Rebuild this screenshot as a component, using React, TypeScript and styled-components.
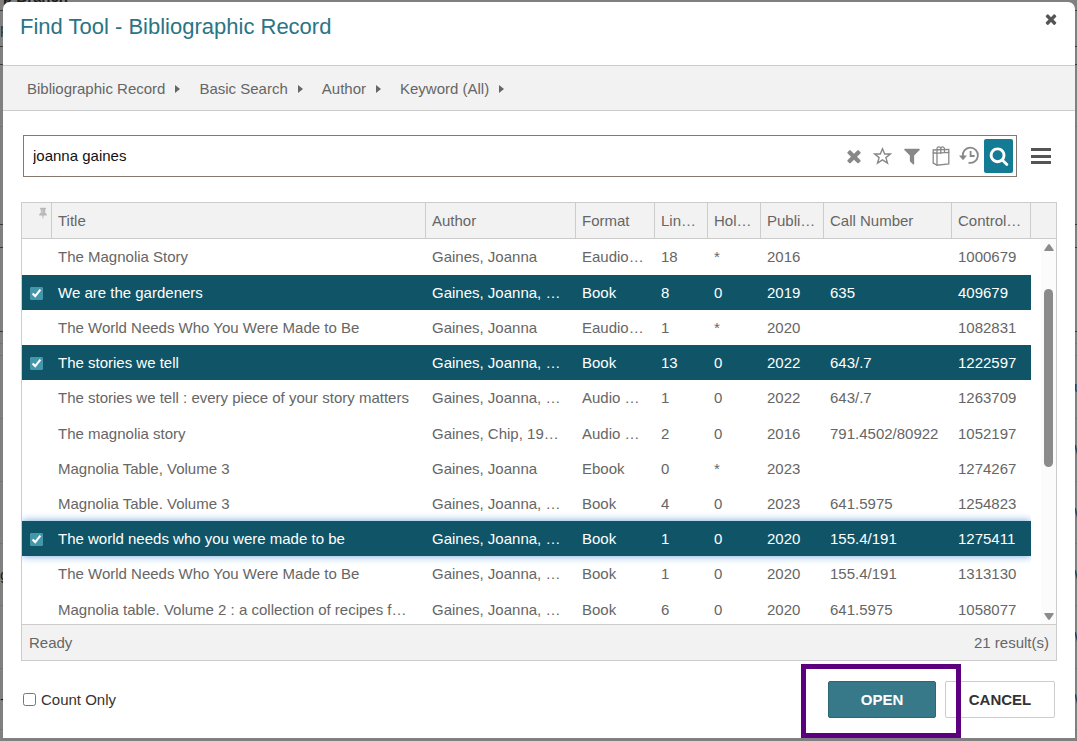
import React from "react";
import styled, { createGlobalStyle } from "styled-components";

const GlobalStyle = createGlobalStyle`
  *, *::before, *::after { box-sizing: border-box; }
  html, body { margin: 0; background: #808080; }
  body {
    font-family: "Liberation Sans", Arial, Helvetica, sans-serif;
    font-size: 15px;
    line-height: 18px;
    color: #666;
  }
  button, input { font: inherit; color: inherit; }
`;

const Stage = styled.div`
  position: relative;
  min-height: 100vh;
  padding: 2px 2px 3px 3px;
  overflow: hidden;
`;

/* dimmed page behind the dialog */
const Behind = styled.div`
  position: absolute;
  inset: 0;
  overflow: hidden;
  color: #1c1c1c;
`;

const BehindRow = styled.div<{ $height: number; $strong?: boolean }>`
  display: flex;
  justify-content: space-between;
  height: ${(p) => p.$height}px;
  border-bottom: 1px solid ${(p) => (p.$strong ? "#3a3a3a" : "#747474")};
`;

const BehindText = styled.span<{ $link?: boolean }>`
  align-self: center;
  color: ${(p) => (p.$link ? "#1d3a57" : "inherit")};
  width: 3px;
  overflow: hidden;
  white-space: nowrap;
`;

const BehindHeading = styled.span`
  margin-top: -12px;
  padding-left: 3px;
  font-weight: bold;
  white-space: nowrap;
`;

const Dialog = styled.section`
  position: relative;
  background: #fff;
  border-radius: 7px 7px 0 0;
`;

const DialogHeader = styled.header`
  display: flex;
  justify-content: space-between;
  align-items: flex-start;
  height: 64px;
  padding: 11px 17px 0;
  border-bottom: 1px solid #ccc;
`;

const DialogTitle = styled.h1`
  margin: 0;
  font-size: 22px;
  line-height: 28px;
  font-weight: normal;
  color: #2a7485;
`;

const IconButton = styled.button`
  display: flex;
  align-items: center;
  justify-content: center;
  padding: 0;
  border: 0;
  background: none;
  color: #888;
  cursor: pointer;
`;

const CloseButton = styled(IconButton)`
  width: 14px;
  height: 12px;
  color: #555;
`;

const Crumbs = styled.nav`
  display: flex;
  align-items: center;
  gap: 19px;
  height: 45px;
  padding: 2px 24px 0;
  background: #f2f2f2;
  border-bottom: 1px solid #ccc;
`;

const Crumb = styled.button`
  display: flex;
  align-items: center;
  gap: 10px;
  padding: 0;
  border: 0;
  background: none;
  white-space: nowrap;
  cursor: pointer;
`;

const SearchRow = styled.form`
  display: flex;
  align-items: center;
  gap: 14px;
  margin: 24px 24px 25px 20px;
`;

const SearchBox = styled.div`
  flex: 1;
  display: flex;
  align-items: center;
  height: 42px;
  padding: 0 3px 0 9px;
  border: 1px solid #857a72;
`;

const SearchInput = styled.input`
  flex: 1;
  min-width: 0;
  padding: 0;
  border: 0;
  outline: 0;
  background: none;
  color: #111;
`;

const SearchTools = styled.div`
  display: flex;
  gap: 8px;
  margin-right: 4px;
`;

const ToolButton = styled(IconButton)`
  width: 21px;
  height: 20px;
`;

const SubmitButton = styled(IconButton)`
  width: 29px;
  height: 34px;
  border-radius: 2px;
  background: #147b95;
  color: #fff;
`;

const Grid = styled.div`
  margin: 0 18px;
  border: 1px solid #ccc;
`;

const GridMain = styled.div`
  display: flex;
  height: 421px;
  overflow: hidden;
`;

const TableArea = styled.div`
  flex: 1;
  min-width: 0;
  overflow: hidden;
`;

const Table = styled.table`
  width: 100%;
  table-layout: fixed;
  border-collapse: separate;
  border-spacing: 0;
`;

const HeadCell = styled.th<{ $width?: number }>`
  width: ${(p) => (p.$width ? `${p.$width}px` : "auto")};
  height: 36px;
  padding: 0 5px 0 6px;
  border-right: 1px solid #ccc;
  border-bottom: 1px solid #ccc;
  background: #f2f2f2;
  font-weight: normal;
  text-align: left;
  white-space: nowrap;
  overflow: hidden;
  text-overflow: ellipsis;
`;

const PinMark = styled.span`
  display: flex;
  justify-content: flex-end;
  height: 28px;
  margin-right: -3px;
  color: #b8b8b8;
`;

const Row = styled.tr<{ $selected?: boolean; $focused?: boolean }>`
  height: 35px;
  position: relative;
  background: ${(p) => (p.$selected ? "#0f5567" : "transparent")};
  color: ${(p) => (p.$selected ? "#fff" : "#666")};
  box-shadow: ${(p) => (p.$focused ? "0 0 8px #6ea3dc" : "none")};

  &:first-child,
  &:nth-child(5n) {
    height: 36px;
  }
`;

const Cell = styled.td<{ $wide?: boolean }>`
  padding: 0 ${(p) => (p.$wide ? 14 : 7)}px 0 6px;
  white-space: nowrap;
  overflow: hidden;
  text-overflow: ellipsis;
`;

const RowCheck = styled.input`
  display: block;
  width: 13px;
  height: 13px;
  margin: 2px 0 0 2px;
  accent-color: #4397ac;
`;

const ScrollColumn = styled.div`
  width: 25px;
  display: flex;
  flex-direction: column;
  align-items: flex-end;
`;

const ScrollHead = styled.div`
  align-self: stretch;
  height: 36px;
  background: #f2f2f2;
  border-bottom: 1px solid #ccc;
`;

const ScrollTrack = styled.div`
  flex: 1;
  width: 15px;
  display: flex;
  flex-direction: column;
  align-items: center;
  padding: 5px 0 4px;
  background: #fbfbfb;
`;

const ScrollThumb = styled.div`
  width: 9px;
  height: 178px;
  margin: 38px 0 auto;
  border-radius: 5px;
  background: #8b8b8b;
`;

const StatusBar = styled.div`
  display: flex;
  justify-content: space-between;
  align-items: center;
  height: 36px;
  padding: 0 7px;
  background: #f2f2f2;
  border-top: 1px solid #ccc;
`;

const DialogFooter = styled.footer`
  display: flex;
  justify-content: space-between;
  align-items: center;
  padding: 20px 20px;
`;

const CountOnly = styled.label`
  display: flex;
  align-items: center;
  gap: 5px;
  color: #333;

  input {
    width: 13px;
    height: 13px;
    margin: 0;
  }
`;

const Actions = styled.div`
  display: flex;
  gap: 9px;
`;

const Highlighted = styled.div`
  position: relative;

  &::after {
    content: "";
    position: absolute;
    inset: -17px -25px -20px -27px;
    border: 5px solid #5d0080;
    pointer-events: none;
    z-index: 1;
  }
`;

const ActionButton = styled.button<{ $primary?: boolean }>`
  width: ${(p) => (p.$primary ? 108 : 110)}px;
  height: 37px;
  padding: 0;
  border: 1px solid ${(p) => (p.$primary ? "#2d6775" : "#ccc")};
  border-radius: 2px;
  background: ${(p) => (p.$primary ? "#377988" : "#fff")};
  color: ${(p) => (p.$primary ? "#fff" : "#333")};
  font-weight: bold;
  cursor: pointer;
`;

const TIMES =
  "M1490 1322q0 40-28 68l-136 136q-28 28-68 28t-68-28l-294-294-294 294q-28 28-68 28t-68-28l-136-136q-28-28-28-68t28-68l294-294-294-294q-28-28-28-68t28-68l136-136q28-28 68-28t68 28l294 294 294-294q28-28 68-28t68 28l136 136q28 28 28 68t-28 68l-294 294 294 294q28 28 28 68z";
const FILTER =
  "M1595 295q17 41-14 70l-493 493v742q0 42-39 59-13 5-25 5-27 0-45-19l-256-256q-19-19-19-45v-486l-493-493q-31-29-14-70 17-39 59-39h1280q42 0 59 39z";
const SEARCH =
  "M1216 832q0-185-131.5-316.5t-316.5-131.5-316.5 131.5-131.5 316.5 131.5 316.5 316.5 131.5 316.5-131.5 131.5-316.5zm512 832q0 52-38 90t-90 38q-54 0-90-38l-343-342q-179 124-399 124-143 0-273.5-55.5t-225-150-150-225-55.5-273.5 55.5-273.5 150-225 225-150 273.5-55.5 273.5 55.5 225 150 150 225 55.5 273.5q0 220-124 399l343 343q37 37 37 90z";
const PIN =
  "M800 864v-448q0-14-9-23t-23-9-23 9-9 23v448q0 14 9 23t23 9 23-9 9-23zm672 352q0 26-19 45t-45 19h-429l-51 483q-2 12-10.5 20.5t-20.5 8.5h-1q-27 0-32-27l-76-485h-404q-26 0-45-19t-19-45q0-123 78.5-221.5t177.5-98.5v-512q-52 0-90-38t-38-90 38-90 90-38h640q52 0 90 38t38 90-38 90-90 38v512q99 0 177.5 98.5t78.5 221.5z";

const GlyphSvg = styled.svg`
  flex: none;
`;

function Glyph({ d, size }: { d: string; size: number }) {
  return (
    <GlyphSvg width={size} height={size} viewBox="0 0 1792 1792" fill="currentColor" aria-hidden="true">
      <path d={d} />
    </GlyphSvg>
  );
}

const StarIcon = () => (
  <svg width="19" height="19" viewBox="0 0 19 19" fill="none" stroke="currentColor" strokeWidth="1.4" aria-hidden="true">
    <path d="M9.500 1.800 11.700 7H17.300L12.900 10.600 14.500 16.200 9.500 12.900 4.500 16.200 6.100 10.600 1.700 7H7.300z" />
  </svg>
);

const BagIcon = () => (
  <svg width="18" height="20" viewBox="0 0 18 20" fill="none" stroke="currentColor" strokeWidth="1.300" aria-hidden="true">
    <path d="M5 7.200 16.800 6.400V17.900L5 19.200z" />
    <path d="M5 7.200 1.200 6.800V17.200L5 19.200" />
    <path d="M1.200 6.800V4L16.800 3.400V6.400" />
    <path d="M5 8V2.600Q5.200.8 6.800.8T8.800 2.600V8M8.800 2.600Q9.200.8 10.600.8T12.500 2.600V7" />
  </svg>
);

const HistoryIcon = () => (
  <svg width="21" height="20" viewBox="0 0 21 20" fill="none" stroke="currentColor" strokeWidth="1.800" aria-hidden="true">
    <path d="M3.800 10.400A7.600 7.600 0 1 1 9.500 16.600" />
    <path d="M0 9.400h8l-4 4.800z" fill="currentColor" stroke="none" />
    <path d="M11.600 5v5h4" />
  </svg>
);

const MenuIcon = () => (
  <svg width="20" height="17" viewBox="0 0 20 17" fill="#555" aria-hidden="true">
    <path d="M0 0h20v3H0zM0 7h20v3H0zM0 13h20v3H0z" />
  </svg>
);

const Caret = () => (
  <svg width="5" height="8" viewBox="0 0 5 8" fill="#666" aria-hidden="true">
    <path d="M0 0l5 4-5 4z" />
  </svg>
);

const Arrow = ({ down }: { down?: boolean }) => (
  <GlyphSvg width="10" height="7" viewBox="0 0 10 7" fill="#8b8b8b" aria-hidden="true">
    <path d={down ? "M1 0h8q1 0 .6 1L6 6.300Q5 7.500 4 6.300L.4 1Q0 0 1 0z" : "M1 7h8q1 0 .6-1L6 .7Q5-.5 4 .7L.4 6Q0 7 1 7z"} />
  </GlyphSvg>
);

const crumbs = ["Bibliographic Record", "Basic Search", "Author", "Keyword (All)"];

const columns: [string, number?][] = [
  ["Title"],
  ["Author", 150],
  ["Format", 79],
  ["Linked", 53],
  ["Holdings", 53],
  ["Published", 63],
  ["Call Number", 128],
  ["Control Number", 79],
];

const records: { cells: string[]; selected?: boolean; focused?: boolean }[] = [
  { cells: ["The Magnolia Story", "Gaines, Joanna", "Eaudiobook", "18", "*", "2016", "", "1000679"] },
  { selected: true, cells: ["We are the gardeners", "Gaines, Joanna, author", "Book", "8", "0", "2019", "635", "409679"] },
  { cells: ["The World Needs Who You Were Made to Be", "Gaines, Joanna", "Eaudiobook", "1", "*", "2020", "", "1082831"] },
  { selected: true, cells: ["The stories we tell", "Gaines, Joanna, author", "Book", "13", "0", "2022", "643/.7", "1222597"] },
  { cells: ["The stories we tell : every piece of your story matters", "Gaines, Joanna, author", "Audio Book", "1", "0", "2022", "643/.7", "1263709"] },
  { cells: ["The magnolia story", "Gaines, Chip, 1974-", "Audio Book", "2", "0", "2016", "791.4502/80922", "1052197"] },
  { cells: ["Magnolia Table, Volume 3", "Gaines, Joanna", "Ebook", "0", "*", "2023", "", "1274267"] },
  { cells: ["Magnolia Table. Volume 3", "Gaines, Joanna, author", "Book", "4", "0", "2023", "641.5975", "1254823"] },
  { selected: true, focused: true, cells: ["The world needs who you were made to be", "Gaines, Joanna, author", "Book", "1", "0", "2020", "155.4/191", "1275411"] },
  { cells: ["The World Needs Who You Were Made to Be", "Gaines, Joanna, author", "Book", "1", "0", "2020", "155.4/191", "1313130"] },
  { cells: ["Magnolia table. Volume 2 : a collection of recipes for gathering", "Gaines, Joanna, author", "Book", "6", "0", "2020", "641.5975", "1058077"] },
];

const behindRows: { height: number; strong?: boolean; left?: string; right?: string }[] = [
  { height: 11, strong: true },
  { height: 36, strong: true, left: "p" },
  { height: 18, strong: true },
  { height: 62 },
  { height: 98, strong: true },
  { height: 23, strong: true },
  { height: 84, strong: true },
  { height: 12 },
  { height: 12 },
  { height: 63, right: "u" },
  { height: 63, right: "W" },
  { height: 62, right: "W" },
  { height: 62, left: "g", right: "W" },
  { height: 63, right: "W" },
  { height: 61, left: "-", right: "W" },
];

export default function App() {
  return (
    <>
      <GlobalStyle />
      <Stage>
        <Behind aria-hidden="true">
          {behindRows.map((row, i) => (
            <BehindRow key={i} $height={row.height} $strong={row.strong}>
              {i === 0 ? <BehindHeading>p Branch</BehindHeading> : <BehindText $link={row.left === "p"}>{row.left}</BehindText>}
              <BehindText $link>{row.right}</BehindText>
            </BehindRow>
          ))}
        </Behind>
        <Dialog role="dialog" aria-labelledby="dialog-title">
          <DialogHeader>
            <DialogTitle id="dialog-title">Find Tool - Bibliographic Record</DialogTitle>
            <CloseButton type="button" aria-label="Close">
              <Glyph d={TIMES} size={16} />
            </CloseButton>
          </DialogHeader>
          <Crumbs aria-label="Search scope">
            {crumbs.map((label) => (
              <Crumb key={label} type="button">
                {label}
                <Caret />
              </Crumb>
            ))}
          </Crumbs>
          <SearchRow onSubmit={(e) => e.preventDefault()}>
            <SearchBox>
              <SearchInput type="text" aria-label="Search" defaultValue="joanna gaines" />
              <SearchTools>
                <ToolButton type="button" aria-label="Clear"><Glyph d={TIMES} size={20} /></ToolButton>
                <ToolButton type="button" aria-label="Favorite"><StarIcon /></ToolButton>
                <ToolButton type="button" aria-label="Filter"><Glyph d={FILTER} size={20} /></ToolButton>
                <ToolButton type="button" aria-label="Record set"><BagIcon /></ToolButton>
                <ToolButton type="button" aria-label="History"><HistoryIcon /></ToolButton>
              </SearchTools>
              <SubmitButton type="submit" aria-label="Run search"><Glyph d={SEARCH} size={20} /></SubmitButton>
            </SearchBox>
            <IconButton type="button" aria-label="Menu"><MenuIcon /></IconButton>
          </SearchRow>
          <Grid>
            <GridMain>
              <TableArea>
                <Table>
                  <thead>
                    <tr>
                      <HeadCell $width={30} aria-label="Selected">
                        <PinMark><Glyph d={PIN} size={12} /></PinMark>
                      </HeadCell>
                      {columns.map(([label, width]) => (
                        <HeadCell key={label} $width={width}>{label}</HeadCell>
                      ))}
                    </tr>
                  </thead>
                  <tbody>
                    {records.map((record, i) => (
                      <Row key={i} $selected={record.selected} $focused={record.focused}>
                        <Cell>
                          {record.selected && <RowCheck type="checkbox" defaultChecked aria-label={record.cells[0]} />}
                        </Cell>
                        {record.cells.map((text, c) => (
                          <Cell key={c} $wide={c < 2}>{text}</Cell>
                        ))}
                      </Row>
                    ))}
                  </tbody>
                </Table>
              </TableArea>
              <ScrollColumn>
                <ScrollHead />
                <ScrollTrack>
                  <Arrow />
                  <ScrollThumb />
                  <Arrow down />
                </ScrollTrack>
              </ScrollColumn>
            </GridMain>
            <StatusBar>
              <span>Ready</span>
              <span>21 result(s)</span>
            </StatusBar>
          </Grid>
          <DialogFooter>
            <CountOnly>
              <input type="checkbox" />
              Count Only
            </CountOnly>
            <Actions>
              <Highlighted>
                <ActionButton type="button" $primary>OPEN</ActionButton>
              </Highlighted>
              <ActionButton type="button">CANCEL</ActionButton>
            </Actions>
          </DialogFooter>
        </Dialog>
      </Stage>
    </>
  );
}
